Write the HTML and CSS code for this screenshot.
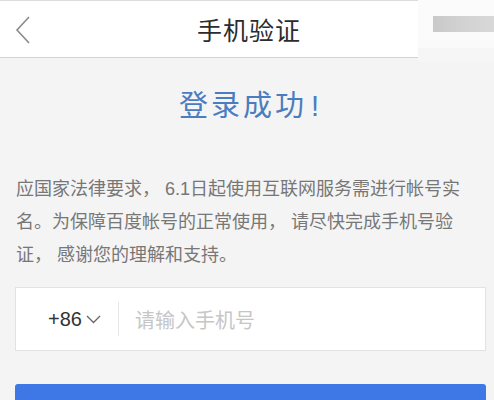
FILE: index.html
```html
<!DOCTYPE html>
<html lang="zh-CN">
<head>
    <meta charset="UTF-8">
    <meta name="viewport" content="width=device-width, initial-scale=1.0">
    <title>手机验证</title>
    <link rel="stylesheet" href="styles.css">
</head>
<body>

    <div class="top-bar">
        <div class="back-button">
            <svg width="16" height="28" viewBox="0 0 16 28">
                <polyline points="14,1 2,14 14,27" fill="none" stroke="#8a8a8a" stroke-width="1.6"/>
            </svg>
        </div>
        <div class="top-title">手机验证</div>
        <div class="top-right"></div>
        <!-- mosaic over the status corner -->
        <div class="mosaic">
            <div class="mosaic-band"></div>
        </div>
    </div>

    <div class="page">
        <div class="success-title">登录成功<span class="mark">!</span></div>

        <p class="notice">应国家法律要求，&nbsp;6.1日起使用互联网服务需进行帐号实<br>名。为保障百度帐号的正常使用，&nbsp;请尽快完成手机号验<br>证，&nbsp;感谢您的理解和支持。</p>

        <div class="phone-box">
            <div class="country-code">
                +86
                <svg width="15" height="9" viewBox="0 0 15 9">
                    <polyline points="1,1 7.5,7.5 14,1" fill="none" stroke="#666" stroke-width="1.3"/>
                </svg>
            </div>
            <div class="phone-input">请输入手机号</div>
        </div>

        <div class="next-button"></div>
    </div>

</body>
</html>
```

FILE: styles.css
```css
/* Phone verification page */
body {
    margin: 0;
    background-color: #f4f4f4;
    font-family: "Liberation Sans", "Noto Sans CJK SC", sans-serif;
    overflow: hidden;
}

.top-bar {
    position: relative;
    display: grid;
    grid-template-columns: 80px 1fr 80px;
    align-items: center;
    height: 56px;
    background-color: #fff;
    border-top: 1px solid #dcdcdc;
    border-bottom: 1px solid #d4d4d4;
}

.back-button {
    padding-left: 15px;
    padding-top: 2px;
}

.back-button svg {
    display: block;
}

.top-title {
    text-align: center;
    font-size: 25px;
    color: #2c2c2c;
    letter-spacing: 1px;
    padding-left: 4px;
}

.mosaic {
    position: absolute;
    top: -1px;
    right: 0;
    width: 76px;
    height: 62px;
    background: linear-gradient(to bottom, #fbfbfb 0, #fafafa 48px, #f6f6f6 48px);
}

.mosaic-band {
    margin: 0 0 0 15px;
    height: 16px;
    background: linear-gradient(to bottom, #ececec 0, #ececec 16px);
}

.mosaic-band::after {
    content: "";
    display: block;
    height: 16px;
    margin-top: 16px;
    background: linear-gradient(to right, #c9c9c9, #d2d2d2 50%, #d8d8d8);
}

.page {
    padding: 0 8px 0 15px;
}

.success-title {
    margin-top: 28px;
    text-align: center;
    font-size: 29px;
    line-height: 40px;
    color: #4a7dc0;
    letter-spacing: 3px;
}

.success-title .mark {
    margin-left: 4px;
}

.notice {
    margin: 47px 0 0 1px;
    font-size: 18px;
    line-height: 33px;
    color: #777;
}

.phone-box {
    display: flex;
    align-items: center;
    margin-top: 15px;
    height: 62px;
    background-color: #fff;
    border: 1px solid #e2e2e2;
}

.country-code {
    display: flex;
    align-items: center;
    gap: 4px;
    width: 70px;
    padding-left: 32px;
    font-size: 20px;
    color: #333;
    border-right: 1px solid #e6e6e6;
    height: 34px;
}

.phone-input {
    padding-left: 16px;
    font-size: 20px;
    color: #c6c6c6;
}

.next-button {
    height: 50px;
    margin-top: 33px;
    border-radius: 3px;
    background-color: #3e78e7;
}
```
